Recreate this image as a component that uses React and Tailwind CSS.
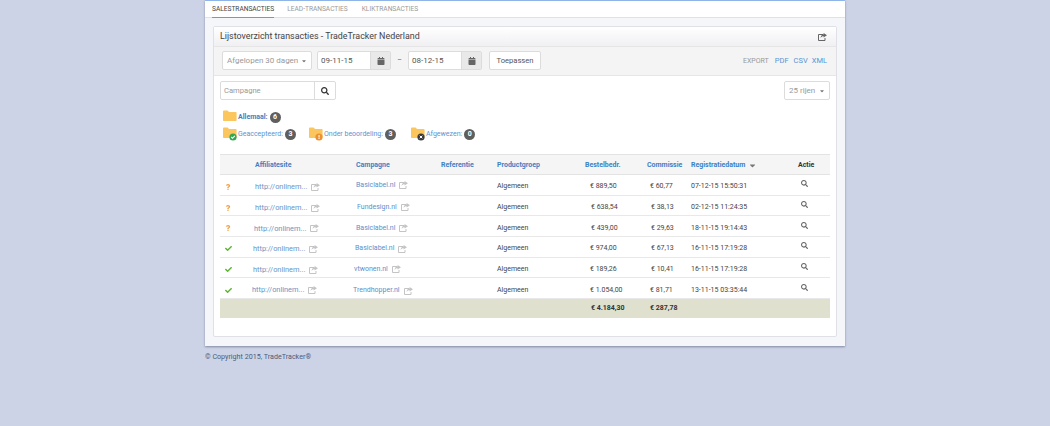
import { FaCalendar, FaCaretDown, FaCheck, FaQuestion, FaSearch } from "react-icons/fa";

const gridCols = "grid grid-cols-[34px_101px_86px_56px_88px_62px_44px_107px_31px]";

const rows = [
  { st: "q", site: "pl-[1px]", camp: "pl-[1px] -mt-[3px]", name: "Basiclabel.nl", amount: "€ 889,50", aPad: "pl-[5px]", com: "€ 60,77", cPad: "pl-[3px]", date: "07-12-15 15:50:31" },
  { st: "q", site: "pl-[1px]", camp: "pl-[2px] -mt-[1px]", name: "Fundesign.nl", amount: "€ 638,54", aPad: "pl-[6px] -mt-[1px]", com: "€ 38,13", cPad: "pl-[4px]", date: "02-12-15 11:24:35" },
  { st: "q", site: "", camp: "pl-[1px]", name: "Basiclabel.nl", amount: "€ 439,00", aPad: "pl-[6px]", com: "€ 29,63", cPad: "pl-[4px]", date: "18-11-15 19:14:43" },
  { st: "c", site: "-ml-[1px]", camp: "", name: "Basiclabel.nl", amount: "€ 974,00", aPad: "pl-[5px]", com: "€ 67,13", cPad: "pl-[4px]", date: "16-11-15 17:19:28" },
  { st: "c", site: "-ml-[1px]", camp: "-ml-[1px] -mt-[1px]", name: "vtwonen.nl", amount: "€ 189,26", aPad: "pl-[5px]", com: "€ 10,41", cPad: "pl-[4px]", date: "16-11-15 17:19:28" },
  { st: "c", site: "-ml-[2px] -mt-[1px]", camp: "-ml-[2px] mt-[1px]", name: "Trendhopper.nl", amount: "€ 1.054,00", aPad: "pl-[5px]", com: "€ 81,71", cPad: "pl-[3px]", date: "13-11-15 03:35:44" },
];

// open box with an arrow leaving at the top right
const ShareIcon = ({ className }) => (
  <svg width="9" height="8" viewBox="0 0 9 8" className={"shrink-0 " + className}>
    <path d="M5 1.5H.5v6h6.5V5" fill="none" stroke="currentColor" strokeWidth="1" />
    <path d="M5.6 0L9 2.2 5.6 4.4V3.2C4.2 3.2 3.2 3.8 2.6 5.2 2.6 3.2 3.8 1.6 5.6 1.3Z" fill="currentColor" />
  </svg>
);

const Folder = ({ badge }) => (
  <svg width="15" height="14" viewBox="0 0 15 14" className="shrink-0">
    <path d="M0 1.5C0 1 .4.6 1 .6h3.6l1.4 1.5h6.6c.6 0 1 .4 1 1V10c0 .6-.4 1-1 1H1c-.6 0-1-.4-1-1Z" fill="#fcc65e" />
    {badge === "ok" && (
      <>
        <circle cx="10" cy="10" r="3.6" fill="#2fa84f" />
        <path d="M8.2 10l1.3 1.3 2.3-2.5" stroke="#fff" strokeWidth="1.1" fill="none" />
      </>
    )}
    {badge === "wait" && (
      <>
        <circle cx="10" cy="10" r="3.6" fill="#f0902c" />
        <rect x="9.5" y="8" width="1.1" height="2.6" fill="#fff" />
        <rect x="9.5" y="11" width="1.1" height="1" fill="#fff" />
      </>
    )}
    {badge === "no" && (
      <>
        <circle cx="10" cy="10" r="3.6" fill="#3c3c3c" />
        <path d="M8.7 8.7l2.6 2.6M11.3 8.7l-2.6 2.6" stroke="#fff" strokeWidth="1" fill="none" />
      </>
    )}
  </svg>
);

const Badge = ({ n }) => (
  <span className="flex h-[11px] w-[11px] items-center justify-center rounded-full bg-[#5f5f5f] text-[7px] font-bold text-white">{n}</span>
);

const Status = ({ label, n, badge, className }) => (
  <div className={"flex items-center " + className}>
    <Folder badge={badge} />
    <span className="text-[#5b93d3]">{label}:</span>
    <span className="ml-[2px]"><Badge n={n} /></span>
  </div>
);

const DateInput = ({ value }) => (
  <div className="flex h-[19px] rounded-[2px] border border-[#dcdcdc] bg-white">
    <div className="flex w-[52px] items-center pl-[3px] text-[8px] text-[#555]">{value}</div>
    <div className="flex w-[20px] items-center justify-center border-l border-[#dcdcdc] bg-[#e9e9e9] text-[#666]">
      <FaCalendar size={8} />
    </div>
  </div>
);

export default function App() {
  return (
    <div className="min-h-[426px] bg-[#cdd3e6] font-['Roboto',sans-serif] text-[7px] leading-[11px] text-[#444]">
      <div className="ml-[205px] w-[640px]">
        <div className="border-t border-[#8fb5e8] bg-[#f5f6fa] pb-[9px] shadow-[0_1px_2px_rgba(80,90,120,0.6)]">
          <div className="flex h-[17px] border-b border-[#dfe1e5] bg-white pl-[7px] text-[6.6px] text-[#9a9a9a]">
            <div className="h-[17px] border-b border-[#5aa0dc] pt-[3px] text-[#444]">SALESTRANSACTIES</div>
            <div className="ml-[13px] pt-[3px]">LEAD-TRANSACTIES</div>
            <div className="ml-[14px] pt-[3px]">KLIKTRANSACTIES</div>
          </div>
          <div className="mx-[8px] mt-[8px] h-[311px] rounded-[2px] border border-[#dfe1e6] bg-white">
            <div className="flex h-[19px] items-center justify-between bg-gradient-to-b from-white to-[#f0f0f3] pl-[6px] pr-[9px] text-[8.9px] text-[#444]">
              <span>Lijstoverzicht transacties - TradeTracker Nederland</span>
              <ShareIcon className="text-[#666]" />
            </div>
            <div className="flex h-[30px] items-center border-y border-[#e6e6e6] bg-[#f4f4f4] pb-[1px] pl-[8px] pr-[9px]">
              <div className="flex h-[19px] w-[90px] items-center justify-between rounded-[2px] border border-[#dcdcdc] bg-white pl-[4px] pr-[4px] text-[8px] text-[#999]">
                <span className="whitespace-nowrap">Afgelopen 30 dagen</span>
                <FaCaretDown size={6} className="text-[#777]" />
              </div>
              <div className="ml-[5px]"><DateInput value="09-11-15" /></div>
              <span className="w-[17px] text-center text-[#666]">–</span>
              <DateInput value="08-12-15" />
              <div className="ml-[7px] flex h-[19px] w-[52px] items-center justify-center rounded-[2px] border border-[#dcdcdc] bg-white text-[7.6px] text-[#555]">Toepassen</div>
              <div className="ml-auto flex items-center text-[7.5px] text-[#5b93d3]">
                <span className="mr-[6px] mt-[1px] text-[7px] text-[#999]">EXPORT</span>
                <span>PDF</span>
                <span className="ml-[5px]">CSV</span>
                <span className="ml-[4px]">XML</span>
              </div>
            </div>
            <div className="px-[6px]">
              <div className="mt-[5px] flex justify-between">
                <div className="flex h-[19px] rounded-[2px] border border-[#dcdcdc]">
                  <div className="flex w-[93px] items-center pl-[3px] text-[7.6px] text-[#999]">Campagne</div>
                  <div className="flex w-[21px] items-center justify-center border-l border-[#dcdcdc] text-[#333]"><FaSearch size={8} /></div>
                </div>
                <div className="flex h-[19px] w-[46px] items-center justify-between rounded-[2px] border border-[#dcdcdc] pl-[4px] pr-[4px] text-[8px] text-[#999]">
                  <span>25 rijen</span>
                  <FaCaretDown size={6} className="text-[#777]" />
                </div>
              </div>
              <div className="mt-[10px] flex items-center pl-[3px]">
                <Folder />
                <span className="font-bold text-[#3f7fc4]">Allemaal:</span>
                <span className="ml-[2px]"><Badge n="6" /></span>
              </div>
              <div className="mt-[3px] flex pl-[3px]">
                <Status label="Geaccepteerd" n="3" badge="ok" className="w-[86px]" />
                <Status label="Onder beoordeling" n="3" badge="wait" className="w-[102px]" />
                <Status label="Afgewezen" n="0" badge="no" className="" />
              </div>
              <div className="mt-[13px]">
                <div className={gridCols + " h-[21px] items-center border-y border-[#e3e3e3] bg-[#f5f5f5] pt-[2px] font-bold text-[#3f7fc4]"}>
                  <span />
                  <span className="pl-[1px]">Affiliatesite</span>
                  <span className="pl-[1px]">Campagne</span>
                  <span>Referentie</span>
                  <span>Productgroep</span>
                  <span>Bestelbedr.</span>
                  <span>Commissie</span>
                  <span className="flex items-center">Registratiedatum<FaCaretDown size={9} className="ml-[3px] text-[#777]" /></span>
                  <span className="text-[#333]">Actie</span>
                </div>
                {rows.map((r, i) => (
                  <div key={i} className={gridCols + " h-[20.7px] items-center border-b border-[#e8e8e8] pt-[4px]"}>
                    <span className="pl-[5px]">
                      {r.st === "q" ? <FaQuestion size={6} className="text-[#f0a040]" /> : <FaCheck size={7} className="text-[#5ab52f]" />}
                    </span>
                    <span className={"flex items-center text-[7.4px] text-[#6a94c4] " + r.site}>
                      http://onlinem...
                      <ShareIcon className="ml-[4px] text-[#c4c4c4]" />
                    </span>
                    <span className={"flex items-center text-[#5b8fcb] " + r.camp}>
                      {r.name}
                      <ShareIcon className="ml-[4px] text-[#c4c4c4]" />
                    </span>
                    <span />
                    <span>Algemeen</span>
                    <span className={r.aPad}>{r.amount}</span>
                    <span className={r.cPad}>{r.com}</span>
                    <span className="whitespace-nowrap">{r.date}</span>
                    <span className="-mt-[6px] pl-[3px] text-[#666]"><FaSearch size={7} /></span>
                  </div>
                ))}
                <div className={gridCols + " h-[19px] items-center bg-[#dfe0cd] font-bold text-[#333]"}>
                  <span /><span /><span /><span /><span />
                  <span className="pl-[6px]">€ 4.184,30</span>
                  <span className="pl-[3px]">€ 287,78</span>
                  <span /><span />
                </div>
              </div>
            </div>
          </div>
        </div>
        <div className="mt-[5px] text-[7.15px] text-[#4f5b76]">© Copyright 2015, TradeTracker®</div>
      </div>
    </div>
  );
}
